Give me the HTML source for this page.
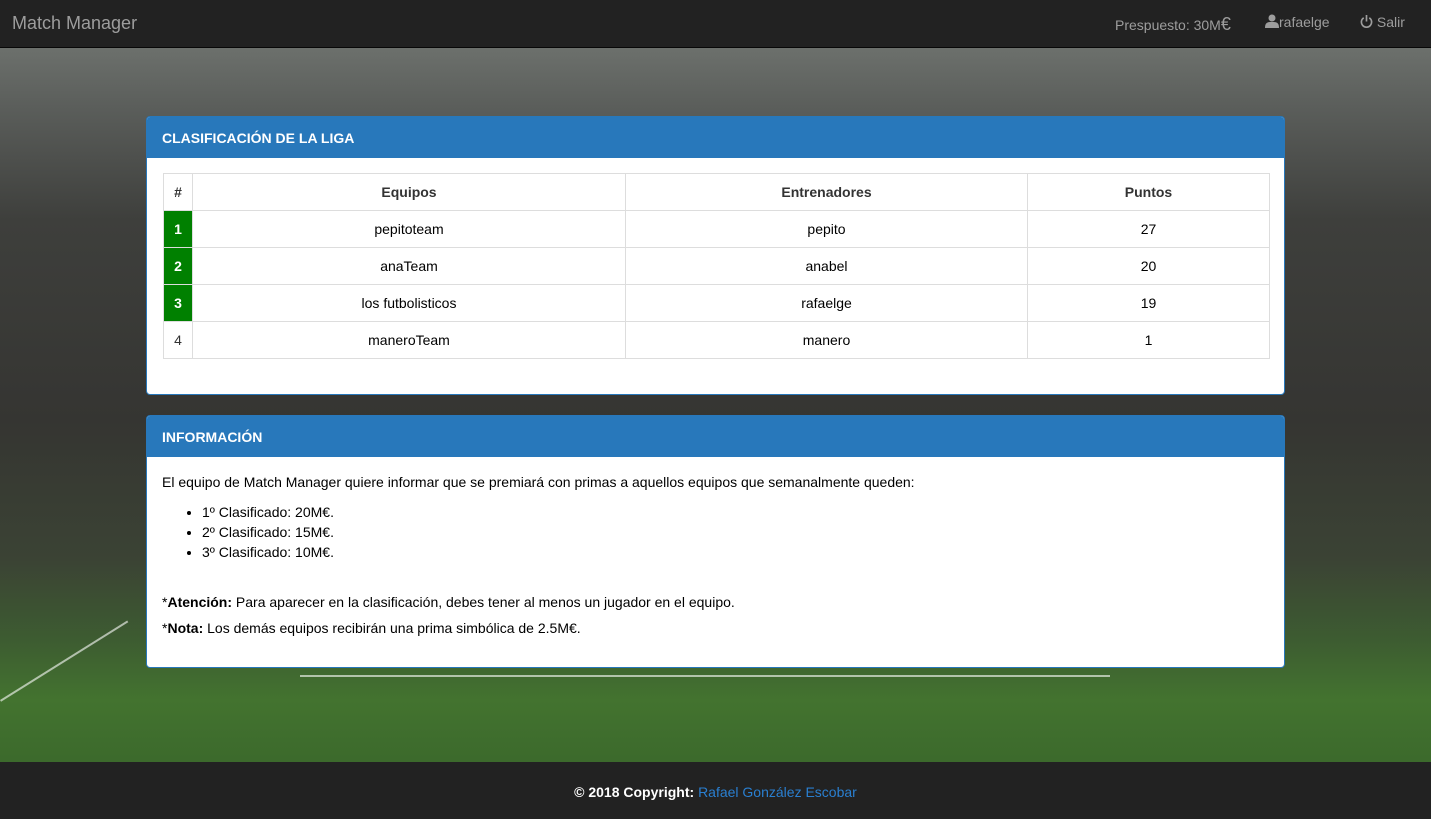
<!DOCTYPE html>
<html><head><meta charset="utf-8"><style>
*{box-sizing:border-box;margin:0;padding:0}
body{width:1431px;height:819px;overflow:hidden;font-family:"Liberation Sans",Arial,sans-serif;font-size:14px;color:#333;position:relative;
background:linear-gradient(180deg,#6c706c 48px,#5a5d5a 110px,#3e3f3c 220px,#353532 420px,#3b4334 560px,#3d5c31 640px,#43732f 700px,#3c6a2c 760px);}
.nav{position:absolute;top:0;left:0;width:1431px;height:48px;background:#222;border-bottom:1px solid #080808;color:#9d9d9d}
.brand{position:absolute;left:12px;top:13px;font-size:18px}
.nr{position:absolute;top:14px;font-size:14px}
.panel{position:absolute;left:146px;width:1139px;background:#fff;border:1px solid #2878bb;border-radius:4px;overflow:hidden}
.ph{background:#2878bb;color:#fff;height:41px;padding:13px 15px;font-size:14px;font-weight:bold}
table{border-collapse:collapse;margin:15px 15px 0 16px;width:1107px}
td,th{border:1px solid #ddd;height:37px;text-align:center;font-size:14px;color:#000}
th{color:#333}
.g{background:#008000;color:#fff;font-weight:bold}
.pb{padding:17px 15px;color:#000}
ul{margin:12px 0 0 40px}li{line-height:20px}
.foot{position:absolute;top:762px;left:0;width:1431px;height:57px;background:#222;color:#fff;text-align:center;padding-top:22px;font-weight:bold}
.line{position:absolute;background:rgba(255,255,255,.6)}
</style></head><body>
<div class="line" style="left:300px;top:675px;width:810px;height:2px"></div>
<div class="line" style="left:0;top:700px;width:150px;height:2px;transform:rotate(-32deg);transform-origin:0 0"></div>
<div class="nav"><span class="brand">Match Manager</span>
<span class="nr" style="left:1115px">Prespuesto: 30M<span style="font-size:18px">€</span></span>
<span class="nr" style="left:1265px"><svg width="14" height="14" viewBox="0 0 14 14" style="vertical-align:-1px"><circle cx="7" cy="4" r="3.5" fill="#9d9d9d"/><path d="M0 14 C0 8 3 8 7 8 C11 8 14 8 14 14Z" fill="#9d9d9d"/></svg>rafaelge</span>
<span class="nr" style="left:1360px"><svg width="13" height="13" viewBox="0 0 14 14" style="vertical-align:-1px"><path d="M4 3 A5.5 5.5 0 1 0 10 3" fill="none" stroke="#9d9d9d" stroke-width="1.8"/><path d="M7 0V7" stroke="#9d9d9d" stroke-width="1.8"/></svg> Salir</span></div>
<div class="panel" style="top:116px;height:279px"><div class="ph">CLASIFICACIÓN DE LA LIGA</div>
<table><tr><th style="width:29px">#</th><th style="width:433px">Equipos</th><th style="width:402px">Entrenadores</th><th>Puntos</th></tr>
<tr><td class="g">1</td><td>pepitoteam</td><td>pepito</td><td>27</td></tr>
<tr><td class="g">2</td><td>anaTeam</td><td>anabel</td><td>20</td></tr>
<tr><td class="g">3</td><td>los futbolisticos</td><td>rafaelge</td><td>19</td></tr>
<tr><td style="color:#333">4</td><td>maneroTeam</td><td>manero</td><td>1</td></tr></table></div>
<div class="panel" style="top:415px;height:253px"><div class="ph">INFORMACIÓN</div>
<div class="pb">El equipo de Match Manager quiere informar que se premiará con primas a aquellos equipos que semanalmente queden:
<ul><li>1º Clasificado: 20M€.</li><li>2º Clasificado: 15M€.</li><li>3º Clasificado: 10M€.</li></ul>
<p style="margin-top:32px">*<b>Atención:</b> Para aparecer en la clasificación, debes tener al menos un jugador en el equipo.</p>
<p style="margin-top:10px">*<b>Nota:</b> Los demás equipos recibirán una prima simbólica de 2.5M€.</p></div></div>
<div class="foot">© 2018 Copyright: <span style="color:#2a7fd0;font-weight:normal">Rafael González Escobar</span></div>
</body></html>
